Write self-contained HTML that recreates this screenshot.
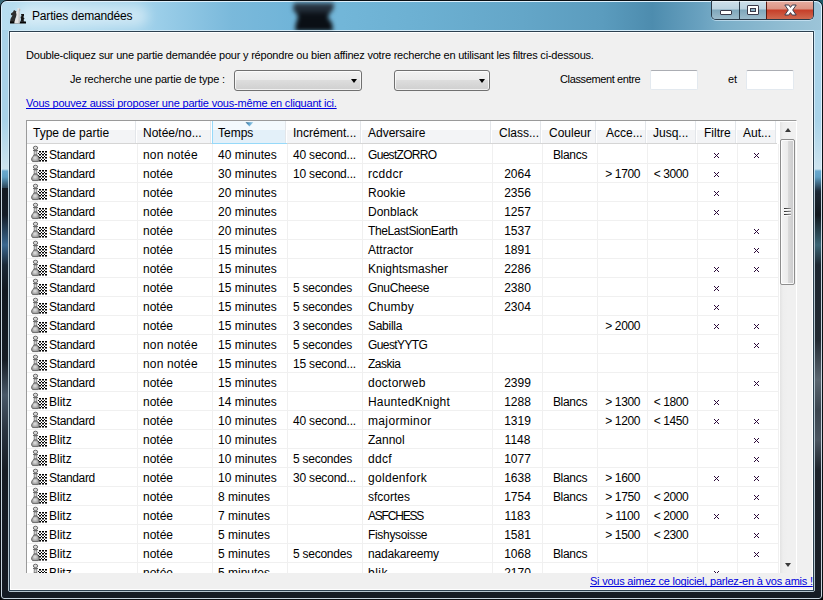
<!DOCTYPE html>
<html><head><meta charset="utf-8">
<style>
*{box-sizing:border-box}
html,body{margin:0;padding:0}
body{width:823px;height:600px;overflow:hidden;position:relative;background:#000;font-family:"Liberation Sans",sans-serif;}
.abs{position:absolute}
#frame{position:absolute;left:0;top:0;width:823px;height:600px;border-radius:7px 7px 4px 4px;border:1px solid #0a0f14;overflow:hidden;
 background:linear-gradient(to bottom,#a9d3e9 0px,#a9d3e9 120px,#cde3ee 168px,#6aa9cf 170px,#5f9fc4 176px,#1c2a38 190px,#121820 200px,#141b24 600px);}
#frame:before{content:"";position:absolute;left:0;top:0;right:0;bottom:0;border:1px solid rgba(230,245,255,0.85);border-radius:6px 6px 3px 3px;}
#title{position:absolute;left:2px;top:2px;width:819px;height:28px;background:linear-gradient(to right,#b8def0 0px,#b2dbef 60px,#9ed0ea 150px,#7ab9db 230px,#70b4d8 290px,#72b6d8 340px,#6cb0d2 420px,#64a6c8 520px,#5b9cbe 600px,#4d8cae 650px,#6aa2c0 700px,#7aaec8 720px,#94bfd4 790px,#9cc4d8 819px);border-radius:6px 6px 0 0}
#blob{position:absolute;left:290px;top:1px;width:48px;height:32px;filter:blur(2.2px)}
#blobin{position:absolute;left:0;top:0;width:48px;height:32px;background:linear-gradient(to bottom,#2c3a48 0,#26323e 8px,#0b1016 14px,#0a0e14 32px);clip-path:polygon(4px 2px,44px 2px,43px 9px,39px 13px,38px 17px,42px 22px,43px 30px,5px 30px,6px 22px,8px 17px,7px 13px,3px 9px)}
#glow{position:absolute;left:18px;top:5px;width:130px;height:22px;background:rgba(255,255,255,0.45);filter:blur(6px);border-radius:11px}
#ttl{position:absolute;left:32px;top:9px;font-size:12px;letter-spacing:-0.18px;color:#000;white-space:nowrap}
#client{position:absolute;left:9px;top:31px;width:805px;height:560px;border:1px solid #2c4050;}
#client2{position:absolute;left:10px;top:32px;width:803px;height:558px;border:1px solid #fff;background:#f0f0f0}
#fl{position:absolute;left:8px;top:30px;width:807px;height:562px;border:1px solid rgba(220,240,250,0.8);border-radius:2px}
.lbl{position:absolute;font-size:11px;color:#000;white-space:nowrap;line-height:13px}
.lnk{color:#0000dd;text-decoration:underline;text-decoration-skip-ink:none}
.combo{position:absolute;height:21px;border:1px solid #707070;border-radius:3px;background:linear-gradient(to bottom,#f2f2f2 0,#ebebeb 45%,#dddddd 50%,#cfcfcf 100%);box-shadow:inset 0 0 0 1px rgba(255,255,255,0.7)}
.combo i{position:absolute;right:4px;top:8px;width:0;height:0;border-left:3.5px solid transparent;border-right:3.5px solid transparent;border-top:4px solid #000}
.tb{position:absolute;height:20px;width:48px;background:#fff;border:1px solid #e3e9ef;border-top-color:#abadb3;border-radius:2px}
#lv{position:absolute;left:26px;top:120px;width:771px;height:453px;border:1px solid #9a9a9a;border-right-color:#fff;border-bottom:none;background:#fff;overflow:hidden}
#lvin{position:absolute;left:-27px;top:-121px;width:823px;height:600px}
#hdr{position:absolute;left:27px;top:121px;width:750px;height:23px;background:linear-gradient(to bottom,#fff 0,#fff 9px,#f3f4f6 9px,#f3f4f6 22px);border-bottom:1px solid #d5d5d5}
#sorted{position:absolute;left:212px;top:121px;width:75px;height:23px;background:linear-gradient(to bottom,#f3f9fd 0,#f3f9fd 9px,#e3f0f9 9px,#e3f0f9 22px);border-left:1px solid #96d9f9;border-right:1px solid #96d9f9;border-bottom:1px solid #96d9f9}
#sarr{position:absolute;left:245px;top:121px;width:0;height:0;border-left:4.5px solid transparent;border-right:4.5px solid transparent;border-top:4px solid #9cc6e4}
.hd{position:absolute;top:121px;width:2px;height:22px;background:linear-gradient(to right,#e3e6ea 0,#e3e6ea 1px,#fff 1px)}
.ht{position:absolute;top:126px;font-size:12px;line-height:14px;color:#000;white-space:nowrap}
.vg{position:absolute;top:144px;width:1px;height:440px;background:#f0f0f0}
.hg{position:absolute;left:27px;width:751px;height:1px;background:#f0f0f0}
.t{position:absolute;font-size:12px;line-height:19px;height:19px;color:#000;white-space:nowrap;margin-top:2px}
.c{text-align:center}
.x{position:absolute;display:block;shape-rendering:crispEdges}
.ic{position:absolute;width:20px;height:20px}
.ic svg{display:block}
#sb{position:absolute;left:780px;top:122px;width:16px;height:452px;background:linear-gradient(to right,#e3e3e3 0,#eeeeee 3px,#f0f0f0 8px,#f0f0f0 17px)}
#thumb{position:absolute;left:780px;top:139px;width:15px;height:146px;border:1px solid #8d8d8d;border-radius:2px;background:linear-gradient(to right,#f4f4f4 0,#ececec 50%,#dcdcdc 51%,#c9c9cb 100%);box-shadow:inset 0 0 0 1px rgba(255,255,255,0.8)}
.grip{position:absolute;left:784px;width:7px;height:1px;background:linear-gradient(to right,#2a2a2a,#555 40%,#9a9a9a);box-shadow:0 1px 0 rgba(255,255,255,0.8)}
.arr{position:absolute;width:0;height:0;border-left:3.5px solid transparent;border-right:3.5px solid transparent}
.cb{position:absolute;top:0px;height:20px}
</style></head><body>
<svg width="0" height="0" style="position:absolute"><symbol id="pawn" viewBox="0 0 20 20" shape-rendering="crispEdges"><defs><radialGradient id="pb" cx="0.45" cy="0.45" r="0.6"><stop offset="0" stop-color="#e4e4e4"/><stop offset="1" stop-color="#8c8c8c"/></radialGradient></defs><g fill="#000"><rect x="11" y="7" width="2" height="1"/><rect x="11" y="8" width="2" height="1" fill-opacity="0.55"/><rect x="14" y="7" width="2" height="1"/><rect x="14" y="8" width="2" height="1" fill-opacity="0.55"/><rect x="17" y="7" width="2" height="1"/><rect x="17" y="8" width="2" height="1" fill-opacity="0.55"/><rect x="11" y="10" width="2" height="1"/><rect x="11" y="11" width="2" height="1" fill-opacity="0.55"/><rect x="14" y="10" width="2" height="1"/><rect x="14" y="11" width="2" height="1" fill-opacity="0.55"/><rect x="17" y="10" width="2" height="1"/><rect x="17" y="11" width="2" height="1" fill-opacity="0.55"/><rect x="11" y="13" width="2" height="1"/><rect x="11" y="14" width="2" height="1" fill-opacity="0.55"/><rect x="14" y="13" width="2" height="1"/><rect x="14" y="14" width="2" height="1" fill-opacity="0.55"/><rect x="17" y="13" width="2" height="1"/><rect x="17" y="14" width="2" height="1" fill-opacity="0.55"/><rect x="11" y="16" width="2" height="1"/><rect x="11" y="17" width="2" height="1" fill-opacity="0.55"/><rect x="14" y="16" width="2" height="1"/><rect x="14" y="17" width="2" height="1" fill-opacity="0.55"/><rect x="17" y="16" width="2" height="1"/><rect x="17" y="17" width="2" height="1" fill-opacity="0.55"/><rect x="10" y="9" width="1" height="1"/><rect x="13" y="9" width="1" height="1"/><rect x="16" y="9" width="1" height="1"/><rect x="10" y="12" width="1" height="1"/><rect x="13" y="12" width="1" height="1"/><rect x="16" y="12" width="1" height="1"/><rect x="10" y="15" width="1" height="1"/><rect x="13" y="15" width="1" height="1"/><rect x="16" y="15" width="1" height="1"/></g><g stroke="#646464" stroke-width="0.95" shape-rendering="geometricPrecision"><ellipse cx="7.5" cy="3.9" rx="2.2" ry="1.7" fill="#d8d8d8"/><path d="M6.3 7 L8.7 7 L8.9 11 L6.1 11 Z" fill="#d4d4d4" stroke-width="0.7"/><path d="M6 11 L9 11 L10 12.5 L11 14 L11.2 16 L10.4 17.6 L4.6 17.6 L3.6 16 L3.9 14 L5 12.5 Z" fill="url(#pb)"/></g><rect x="5" y="6" width="5" height="1" fill="#6a6a6a"/></symbol></svg>
<div class="abs" style="left:0;top:0;width:823px;height:10px;background:linear-gradient(to right,#3a6a7a,#1a3a48 50%,#1e5a68)"></div>
<div id="frame"></div>
<div class="abs" style="left:2px;top:188px;width:6px;height:403px;background:linear-gradient(to bottom,#131a22 0px,#141c26 27px,#3a6890 57px,#1a2836 77px,#121820 102px,#151c24 172px,#485868 207px,#2a3440 242px,#161c24 282px,#141a22 403px)"></div>
<div class="abs" style="left:815px;top:195px;width:6px;height:396px;background:linear-gradient(to bottom,#1a2530 0px,#10161c 20px,#3a6474 50px,#1c2630 70px,#222a32 145px,#5a6670 185px,#3a444e 215px,#4a5560 245px,#1c222a 275px,#181e26 396px)"></div>
<div id="title"></div>
<div id="glow"></div>
<div id="blob"><div id="blobin"></div></div>
<div class="abs" style="left:8px;top:6px;width:20px;height:20px">
<svg width="20" height="20" viewBox="0 0 20 20">
<path d="M6 4 L8.5 5.5 L9.5 7.5 L8.5 10 L7.5 12 L7 16 L2 16 L2.5 13 L3.5 11 L4.5 9.5 L3 9 L3 7.5 L5 6 Z" fill="#2e2e2e"/>
<path d="M13 8 L16 8 L16 10 L15.3 11 L16.5 12.5 L15.5 14 L16.5 15.8 L12.5 15.8 L13 13 L12.5 11 L13.5 10 Z" fill="#161616"/>
<rect x="2" y="15.5" width="16" height="2" fill="#050505"/>
<path d="M9.5 2 L11.8 2.2 L12.5 4 L11.5 5.5 L11.5 10 L11.8 15.5 L11.5 17.5 L6.3 17.5 L6.5 15.5 L8 12 L8.5 9 L8 6 L9.5 4.5 Z" fill="#e4e4e4"/>
<path d="M11.8 2.2 L12.5 4 L11.5 5.5 L11.5 10 L11.8 15.5 L11.5 17.5 L10.5 17.5 L10.6 10 L10.8 4 Z" fill="#b8b8b8"/>
</svg></div>
<div id="ttl">Parties demandées</div>
<!-- caption buttons -->
<div class="abs" style="left:711px;top:0px;width:103px;height:20px;border:1px solid #2a3a48;border-top:none;border-radius:0 0 5px 5px;overflow:hidden;box-shadow:0 1px 0 rgba(220,240,255,0.6)">
 <div class="cb" style="left:0;width:27px;background:linear-gradient(to bottom,#d0e2ec 0,#bcd3e0 9px,#7fa7bb 10px,#9dbccc 19px)"></div>
 <div class="cb" style="left:27px;width:1px;background:#2a3a48"></div>
 <div class="cb" style="left:28px;width:26px;background:linear-gradient(to bottom,#d0e2ec 0,#bcd3e0 9px,#7fa7bb 10px,#9dbccc 19px)"></div>
 <div class="cb" style="left:54px;width:1px;background:#5a1a10"></div>
 <div class="cb" style="left:55px;width:47px;background:linear-gradient(to bottom,#e8b0a4 0,#dc9484 9px,#c73e28 10px,#d06a50 19px)"></div>
 <div class="cb" style="left:0;width:103px;height:1px;top:0;background:#0a0f14"></div>
 <div class="cb" style="left:1px;width:100px;height:1px;top:1px;background:rgba(255,255,255,0.55)"></div>
</div>
<div class="abs" style="left:720px;top:10px;width:12px;height:5px;background:#fff;border:1px solid #3a3a4a;border-radius:1px"></div>
<div class="abs" style="left:747px;top:5px;width:12px;height:10px;background:#fff;border:1px solid #3a3a4a;border-radius:1px"><div class="abs" style="left:2px;top:2px;width:6px;height:4px;background:#8fb3c6;border:1px solid #3a3a4a"></div></div>
<svg class="abs" style="left:784px;top:4px" width="13" height="12" viewBox="0 0 13 12"><path d="M0.8 1 L4.8 1 L6.5 3.4 L8.2 1 L12.2 1 L8.7 6 L12.2 11 L8.2 11 L6.5 8.6 L4.8 11 L0.8 11 L4.3 6 Z" fill="#fff" stroke="#3c3c4c" stroke-width="1" stroke-linejoin="round"/></svg>

<div id="fl"></div>
<div id="client"></div>
<div id="client2"></div>

<div class="lbl" style="left:26px;top:49px;letter-spacing:-0.21px">Double-cliquez sur une partie demandée pour y répondre ou bien affinez votre recherche en utilisant les filtres ci-dessous.</div>
<div class="lbl" style="left:70px;top:73px;letter-spacing:-0.18px">Je recherche une partie de type :</div>
<div class="combo" style="left:234px;top:70px;width:128px"><i></i></div>
<div class="combo" style="left:394px;top:70px;width:96px"><i></i></div>
<div class="lbl" style="left:560px;top:73px;letter-spacing:-0.37px">Classement entre</div>
<div class="tb" style="left:650px;top:70px"></div>
<div class="lbl" style="left:728px;top:73px">et</div>
<div class="tb" style="left:746px;top:70px"></div>
<div class="lbl lnk" style="left:26px;top:97px;letter-spacing:-0.2px">Vous pouvez aussi proposer une partie vous-même en cliquant ici.</div>

<div id="lv"><div id="lvin">
<div id="hdr"></div>
<div id="sorted"></div>
<svg class="abs" style="left:245px;top:122px" width="9" height="5" viewBox="0 0 9 5"><defs><linearGradient id="sag" x1="0" y1="0" x2="1" y2="0.3"><stop offset="0" stop-color="#2e5a78"/><stop offset="0.5" stop-color="#5aa0cc"/><stop offset="1" stop-color="#a8d8f0"/></linearGradient></defs><path d="M0.5 0.3 L8.3 0.3 L4.5 4.6 Z" fill="url(#sag)"/></svg>
<div class="hd" style="left:135px"></div>
<div class="hd" style="left:210px"></div>
<div class="hd" style="left:285px"></div>
<div class="hd" style="left:360px"></div>
<div class="hd" style="left:490px"></div>
<div class="hd" style="left:540px"></div>
<div class="hd" style="left:595px"></div>
<div class="hd" style="left:645px"></div>
<div class="hd" style="left:695px"></div>
<div class="hd" style="left:735px"></div>
<div class="hd" style="left:775px"></div>
<div class="ht" style="left:33px">Type de partie</div>
<div class="ht" style="left:143px">Notée/no...</div>
<div class="ht" style="left:218px">Temps</div>
<div class="ht" style="left:293px">Incrément...</div>
<div class="ht" style="left:368px">Adversaire</div>
<div class="ht" style="left:499px">Class...</div>
<div class="ht" style="left:549px">Couleur</div>
<div class="ht" style="left:606px">Acce...</div>
<div class="ht" style="left:653px">Jusq...</div>
<div class="ht" style="left:704px">Filtre</div>
<div class="ht" style="left:743px">Aut...</div>
<div class="vg" style="left:137px"></div>
<div class="vg" style="left:212px"></div>
<div class="vg" style="left:287px"></div>
<div class="vg" style="left:362px"></div>
<div class="vg" style="left:492px"></div>
<div class="vg" style="left:542px"></div>
<div class="vg" style="left:597px"></div>
<div class="vg" style="left:647px"></div>
<div class="vg" style="left:697px"></div>
<div class="vg" style="left:737px"></div>
<div class="vg" style="left:778px"></div>
<div class="hg" style="top:163px"></div>
<svg class="ic" style="left:28px;top:144px" width="20" height="20"><use href="#pawn"/></svg>
<div class="t" style="left:49px;top:144px;letter-spacing:-0.35px">Standard</div>
<div class="t" style="left:143px;top:144px;letter-spacing:0.15px">non notée</div>
<div class="t" style="left:218px;top:144px">40 minutes</div>
<div class="t" style="left:293px;top:144px;letter-spacing:-0.2px">40 second...</div>
<div class="t" style="left:368px;top:144px;letter-spacing:-0.69px">GuestZORRO</div>
<div class="t c" style="left:543px;width:54px;top:144px;letter-spacing:-0.3px">Blancs</div>
<svg class="x" style="left:714px;top:153px" width="5" height="5"><path d="M0 0h1v1H0zM4 0h1v1H4zM1 1h1v1H1zM3 1h1v1H3zM2 2h1v1H2zM1 3h1v1H1zM3 3h1v1H3zM0 4h1v1H0zM4 4h1v1H4z" fill="#2a0838"/></svg>
<svg class="x" style="left:754px;top:153px" width="5" height="5"><path d="M0 0h1v1H0zM4 0h1v1H4zM1 1h1v1H1zM3 1h1v1H3zM2 2h1v1H2zM1 3h1v1H1zM3 3h1v1H3zM0 4h1v1H0zM4 4h1v1H4z" fill="#2a0838"/></svg>
<div class="hg" style="top:182px"></div>
<svg class="ic" style="left:28px;top:163px" width="20" height="20"><use href="#pawn"/></svg>
<div class="t" style="left:49px;top:163px;letter-spacing:-0.35px">Standard</div>
<div class="t" style="left:143px;top:163px">notée</div>
<div class="t" style="left:218px;top:163px">30 minutes</div>
<div class="t" style="left:293px;top:163px;letter-spacing:-0.2px">10 second...</div>
<div class="t" style="left:368px;top:163px;letter-spacing:0.3px">rcddcr</div>
<div class="t c" style="left:493px;width:49px;top:163px">2064</div>
<div class="t c" style="left:598px;width:49px;top:163px;letter-spacing:-0.35px;text-indent:0.35px">&gt; 1700</div>
<div class="t c" style="left:648px;width:49px;top:163px;letter-spacing:-0.45px;text-indent:-3px">&lt; 3000</div>
<svg class="x" style="left:714px;top:172px" width="5" height="5"><path d="M0 0h1v1H0zM4 0h1v1H4zM1 1h1v1H1zM3 1h1v1H3zM2 2h1v1H2zM1 3h1v1H1zM3 3h1v1H3zM0 4h1v1H0zM4 4h1v1H4z" fill="#2a0838"/></svg>
<div class="hg" style="top:201px"></div>
<svg class="ic" style="left:28px;top:182px" width="20" height="20"><use href="#pawn"/></svg>
<div class="t" style="left:49px;top:182px;letter-spacing:-0.35px">Standard</div>
<div class="t" style="left:143px;top:182px">notée</div>
<div class="t" style="left:218px;top:182px">20 minutes</div>
<div class="t" style="left:368px;top:182px">Rookie</div>
<div class="t c" style="left:493px;width:49px;top:182px">2356</div>
<svg class="x" style="left:714px;top:191px" width="5" height="5"><path d="M0 0h1v1H0zM4 0h1v1H4zM1 1h1v1H1zM3 1h1v1H3zM2 2h1v1H2zM1 3h1v1H1zM3 3h1v1H3zM0 4h1v1H0zM4 4h1v1H4z" fill="#2a0838"/></svg>
<div class="hg" style="top:220px"></div>
<svg class="ic" style="left:28px;top:201px" width="20" height="20"><use href="#pawn"/></svg>
<div class="t" style="left:49px;top:201px;letter-spacing:-0.35px">Standard</div>
<div class="t" style="left:143px;top:201px">notée</div>
<div class="t" style="left:218px;top:201px">20 minutes</div>
<div class="t" style="left:368px;top:201px">Donblack</div>
<div class="t c" style="left:493px;width:49px;top:201px">1257</div>
<svg class="x" style="left:714px;top:210px" width="5" height="5"><path d="M0 0h1v1H0zM4 0h1v1H4zM1 1h1v1H1zM3 1h1v1H3zM2 2h1v1H2zM1 3h1v1H1zM3 3h1v1H3zM0 4h1v1H0zM4 4h1v1H4z" fill="#2a0838"/></svg>
<div class="hg" style="top:239px"></div>
<svg class="ic" style="left:28px;top:220px" width="20" height="20"><use href="#pawn"/></svg>
<div class="t" style="left:49px;top:220px;letter-spacing:-0.35px">Standard</div>
<div class="t" style="left:143px;top:220px">notée</div>
<div class="t" style="left:218px;top:220px">20 minutes</div>
<div class="t" style="left:368px;top:220px;letter-spacing:-0.41px">TheLastSionEarth</div>
<div class="t c" style="left:493px;width:49px;top:220px">1537</div>
<svg class="x" style="left:754px;top:229px" width="5" height="5"><path d="M0 0h1v1H0zM4 0h1v1H4zM1 1h1v1H1zM3 1h1v1H3zM2 2h1v1H2zM1 3h1v1H1zM3 3h1v1H3zM0 4h1v1H0zM4 4h1v1H4z" fill="#2a0838"/></svg>
<div class="hg" style="top:258px"></div>
<svg class="ic" style="left:28px;top:239px" width="20" height="20"><use href="#pawn"/></svg>
<div class="t" style="left:49px;top:239px;letter-spacing:-0.35px">Standard</div>
<div class="t" style="left:143px;top:239px">notée</div>
<div class="t" style="left:218px;top:239px">15 minutes</div>
<div class="t" style="left:368px;top:239px">Attractor</div>
<div class="t c" style="left:493px;width:49px;top:239px">1891</div>
<svg class="x" style="left:754px;top:248px" width="5" height="5"><path d="M0 0h1v1H0zM4 0h1v1H4zM1 1h1v1H1zM3 1h1v1H3zM2 2h1v1H2zM1 3h1v1H1zM3 3h1v1H3zM0 4h1v1H0zM4 4h1v1H4z" fill="#2a0838"/></svg>
<div class="hg" style="top:277px"></div>
<svg class="ic" style="left:28px;top:258px" width="20" height="20"><use href="#pawn"/></svg>
<div class="t" style="left:49px;top:258px;letter-spacing:-0.35px">Standard</div>
<div class="t" style="left:143px;top:258px">notée</div>
<div class="t" style="left:218px;top:258px">15 minutes</div>
<div class="t" style="left:368px;top:258px">Knightsmasher</div>
<div class="t c" style="left:493px;width:49px;top:258px">2286</div>
<svg class="x" style="left:714px;top:267px" width="5" height="5"><path d="M0 0h1v1H0zM4 0h1v1H4zM1 1h1v1H1zM3 1h1v1H3zM2 2h1v1H2zM1 3h1v1H1zM3 3h1v1H3zM0 4h1v1H0zM4 4h1v1H4z" fill="#2a0838"/></svg>
<svg class="x" style="left:754px;top:267px" width="5" height="5"><path d="M0 0h1v1H0zM4 0h1v1H4zM1 1h1v1H1zM3 1h1v1H3zM2 2h1v1H2zM1 3h1v1H1zM3 3h1v1H3zM0 4h1v1H0zM4 4h1v1H4z" fill="#2a0838"/></svg>
<div class="hg" style="top:296px"></div>
<svg class="ic" style="left:28px;top:277px" width="20" height="20"><use href="#pawn"/></svg>
<div class="t" style="left:49px;top:277px;letter-spacing:-0.35px">Standard</div>
<div class="t" style="left:143px;top:277px">notée</div>
<div class="t" style="left:218px;top:277px">15 minutes</div>
<div class="t" style="left:293px;top:277px;letter-spacing:-0.25px">5 secondes</div>
<div class="t" style="left:368px;top:277px;letter-spacing:-0.34px">GnuCheese</div>
<div class="t c" style="left:493px;width:49px;top:277px">2380</div>
<svg class="x" style="left:714px;top:286px" width="5" height="5"><path d="M0 0h1v1H0zM4 0h1v1H4zM1 1h1v1H1zM3 1h1v1H3zM2 2h1v1H2zM1 3h1v1H1zM3 3h1v1H3zM0 4h1v1H0zM4 4h1v1H4z" fill="#2a0838"/></svg>
<div class="hg" style="top:315px"></div>
<svg class="ic" style="left:28px;top:296px" width="20" height="20"><use href="#pawn"/></svg>
<div class="t" style="left:49px;top:296px;letter-spacing:-0.35px">Standard</div>
<div class="t" style="left:143px;top:296px">notée</div>
<div class="t" style="left:218px;top:296px">15 minutes</div>
<div class="t" style="left:293px;top:296px;letter-spacing:-0.25px">5 secondes</div>
<div class="t" style="left:368px;top:296px;letter-spacing:0.2px">Chumby</div>
<div class="t c" style="left:493px;width:49px;top:296px">2304</div>
<svg class="x" style="left:714px;top:305px" width="5" height="5"><path d="M0 0h1v1H0zM4 0h1v1H4zM1 1h1v1H1zM3 1h1v1H3zM2 2h1v1H2zM1 3h1v1H1zM3 3h1v1H3zM0 4h1v1H0zM4 4h1v1H4z" fill="#2a0838"/></svg>
<div class="hg" style="top:334px"></div>
<svg class="ic" style="left:28px;top:315px" width="20" height="20"><use href="#pawn"/></svg>
<div class="t" style="left:49px;top:315px;letter-spacing:-0.35px">Standard</div>
<div class="t" style="left:143px;top:315px">notée</div>
<div class="t" style="left:218px;top:315px">15 minutes</div>
<div class="t" style="left:293px;top:315px;letter-spacing:-0.25px">3 secondes</div>
<div class="t" style="left:368px;top:315px;letter-spacing:-0.28px">Sabilla</div>
<div class="t c" style="left:598px;width:49px;top:315px;letter-spacing:-0.35px;text-indent:0.35px">&gt; 2000</div>
<svg class="x" style="left:714px;top:324px" width="5" height="5"><path d="M0 0h1v1H0zM4 0h1v1H4zM1 1h1v1H1zM3 1h1v1H3zM2 2h1v1H2zM1 3h1v1H1zM3 3h1v1H3zM0 4h1v1H0zM4 4h1v1H4z" fill="#2a0838"/></svg>
<svg class="x" style="left:754px;top:324px" width="5" height="5"><path d="M0 0h1v1H0zM4 0h1v1H4zM1 1h1v1H1zM3 1h1v1H3zM2 2h1v1H2zM1 3h1v1H1zM3 3h1v1H3zM0 4h1v1H0zM4 4h1v1H4z" fill="#2a0838"/></svg>
<div class="hg" style="top:353px"></div>
<svg class="ic" style="left:28px;top:334px" width="20" height="20"><use href="#pawn"/></svg>
<div class="t" style="left:49px;top:334px;letter-spacing:-0.35px">Standard</div>
<div class="t" style="left:143px;top:334px;letter-spacing:0.15px">non notée</div>
<div class="t" style="left:218px;top:334px">15 minutes</div>
<div class="t" style="left:293px;top:334px;letter-spacing:-0.25px">5 secondes</div>
<div class="t" style="left:368px;top:334px;letter-spacing:-0.6px">GuestYYTG</div>
<svg class="x" style="left:754px;top:343px" width="5" height="5"><path d="M0 0h1v1H0zM4 0h1v1H4zM1 1h1v1H1zM3 1h1v1H3zM2 2h1v1H2zM1 3h1v1H1zM3 3h1v1H3zM0 4h1v1H0zM4 4h1v1H4z" fill="#2a0838"/></svg>
<div class="hg" style="top:372px"></div>
<svg class="ic" style="left:28px;top:353px" width="20" height="20"><use href="#pawn"/></svg>
<div class="t" style="left:49px;top:353px;letter-spacing:-0.35px">Standard</div>
<div class="t" style="left:143px;top:353px;letter-spacing:0.15px">non notée</div>
<div class="t" style="left:218px;top:353px">15 minutes</div>
<div class="t" style="left:293px;top:353px;letter-spacing:-0.2px">15 second...</div>
<div class="t" style="left:368px;top:353px;letter-spacing:-0.5px">Zaskia</div>
<div class="hg" style="top:391px"></div>
<svg class="ic" style="left:28px;top:372px" width="20" height="20"><use href="#pawn"/></svg>
<div class="t" style="left:49px;top:372px;letter-spacing:-0.35px">Standard</div>
<div class="t" style="left:143px;top:372px">notée</div>
<div class="t" style="left:218px;top:372px">15 minutes</div>
<div class="t" style="left:368px;top:372px;letter-spacing:0.25px">doctorweb</div>
<div class="t c" style="left:493px;width:49px;top:372px">2399</div>
<svg class="x" style="left:754px;top:381px" width="5" height="5"><path d="M0 0h1v1H0zM4 0h1v1H4zM1 1h1v1H1zM3 1h1v1H3zM2 2h1v1H2zM1 3h1v1H1zM3 3h1v1H3zM0 4h1v1H0zM4 4h1v1H4z" fill="#2a0838"/></svg>
<div class="hg" style="top:410px"></div>
<svg class="ic" style="left:28px;top:391px" width="20" height="20"><use href="#pawn"/></svg>
<div class="t" style="left:49px;top:391px">Blitz</div>
<div class="t" style="left:143px;top:391px">notée</div>
<div class="t" style="left:218px;top:391px">14 minutes</div>
<div class="t" style="left:368px;top:391px;letter-spacing:0.2px">HauntedKnight</div>
<div class="t c" style="left:493px;width:49px;top:391px">1288</div>
<div class="t c" style="left:543px;width:54px;top:391px;letter-spacing:-0.3px">Blancs</div>
<div class="t c" style="left:598px;width:49px;top:391px;letter-spacing:-0.35px;text-indent:0.35px">&gt; 1300</div>
<div class="t c" style="left:648px;width:49px;top:391px;letter-spacing:-0.45px;text-indent:-3px">&lt; 1800</div>
<svg class="x" style="left:714px;top:400px" width="5" height="5"><path d="M0 0h1v1H0zM4 0h1v1H4zM1 1h1v1H1zM3 1h1v1H3zM2 2h1v1H2zM1 3h1v1H1zM3 3h1v1H3zM0 4h1v1H0zM4 4h1v1H4z" fill="#2a0838"/></svg>
<div class="hg" style="top:429px"></div>
<svg class="ic" style="left:28px;top:410px" width="20" height="20"><use href="#pawn"/></svg>
<div class="t" style="left:49px;top:410px;letter-spacing:-0.35px">Standard</div>
<div class="t" style="left:143px;top:410px">notée</div>
<div class="t" style="left:218px;top:410px">10 minutes</div>
<div class="t" style="left:293px;top:410px;letter-spacing:-0.2px">40 second...</div>
<div class="t" style="left:368px;top:410px;letter-spacing:0.35px">majorminor</div>
<div class="t c" style="left:493px;width:49px;top:410px">1319</div>
<div class="t c" style="left:598px;width:49px;top:410px;letter-spacing:-0.35px;text-indent:0.35px">&gt; 1200</div>
<div class="t c" style="left:648px;width:49px;top:410px;letter-spacing:-0.45px;text-indent:-3px">&lt; 1450</div>
<svg class="x" style="left:714px;top:419px" width="5" height="5"><path d="M0 0h1v1H0zM4 0h1v1H4zM1 1h1v1H1zM3 1h1v1H3zM2 2h1v1H2zM1 3h1v1H1zM3 3h1v1H3zM0 4h1v1H0zM4 4h1v1H4z" fill="#2a0838"/></svg>
<svg class="x" style="left:754px;top:419px" width="5" height="5"><path d="M0 0h1v1H0zM4 0h1v1H4zM1 1h1v1H1zM3 1h1v1H3zM2 2h1v1H2zM1 3h1v1H1zM3 3h1v1H3zM0 4h1v1H0zM4 4h1v1H4z" fill="#2a0838"/></svg>
<div class="hg" style="top:448px"></div>
<svg class="ic" style="left:28px;top:429px" width="20" height="20"><use href="#pawn"/></svg>
<div class="t" style="left:49px;top:429px">Blitz</div>
<div class="t" style="left:143px;top:429px">notée</div>
<div class="t" style="left:218px;top:429px">10 minutes</div>
<div class="t" style="left:368px;top:429px">Zannol</div>
<div class="t c" style="left:493px;width:49px;top:429px">1148</div>
<svg class="x" style="left:754px;top:438px" width="5" height="5"><path d="M0 0h1v1H0zM4 0h1v1H4zM1 1h1v1H1zM3 1h1v1H3zM2 2h1v1H2zM1 3h1v1H1zM3 3h1v1H3zM0 4h1v1H0zM4 4h1v1H4z" fill="#2a0838"/></svg>
<div class="hg" style="top:467px"></div>
<svg class="ic" style="left:28px;top:448px" width="20" height="20"><use href="#pawn"/></svg>
<div class="t" style="left:49px;top:448px">Blitz</div>
<div class="t" style="left:143px;top:448px">notée</div>
<div class="t" style="left:218px;top:448px">10 minutes</div>
<div class="t" style="left:293px;top:448px;letter-spacing:-0.25px">5 secondes</div>
<div class="t" style="left:368px;top:448px;letter-spacing:0.3px">ddcf</div>
<div class="t c" style="left:493px;width:49px;top:448px">1077</div>
<svg class="x" style="left:754px;top:457px" width="5" height="5"><path d="M0 0h1v1H0zM4 0h1v1H4zM1 1h1v1H1zM3 1h1v1H3zM2 2h1v1H2zM1 3h1v1H1zM3 3h1v1H3zM0 4h1v1H0zM4 4h1v1H4z" fill="#2a0838"/></svg>
<div class="hg" style="top:486px"></div>
<svg class="ic" style="left:28px;top:467px" width="20" height="20"><use href="#pawn"/></svg>
<div class="t" style="left:49px;top:467px;letter-spacing:-0.35px">Standard</div>
<div class="t" style="left:143px;top:467px">notée</div>
<div class="t" style="left:218px;top:467px">10 minutes</div>
<div class="t" style="left:293px;top:467px;letter-spacing:-0.2px">30 second...</div>
<div class="t" style="left:368px;top:467px;letter-spacing:0.3px">goldenfork</div>
<div class="t c" style="left:493px;width:49px;top:467px">1638</div>
<div class="t c" style="left:543px;width:54px;top:467px;letter-spacing:-0.3px">Blancs</div>
<div class="t c" style="left:598px;width:49px;top:467px;letter-spacing:-0.35px;text-indent:0.35px">&gt; 1600</div>
<svg class="x" style="left:714px;top:476px" width="5" height="5"><path d="M0 0h1v1H0zM4 0h1v1H4zM1 1h1v1H1zM3 1h1v1H3zM2 2h1v1H2zM1 3h1v1H1zM3 3h1v1H3zM0 4h1v1H0zM4 4h1v1H4z" fill="#2a0838"/></svg>
<svg class="x" style="left:754px;top:476px" width="5" height="5"><path d="M0 0h1v1H0zM4 0h1v1H4zM1 1h1v1H1zM3 1h1v1H3zM2 2h1v1H2zM1 3h1v1H1zM3 3h1v1H3zM0 4h1v1H0zM4 4h1v1H4z" fill="#2a0838"/></svg>
<div class="hg" style="top:505px"></div>
<svg class="ic" style="left:28px;top:486px" width="20" height="20"><use href="#pawn"/></svg>
<div class="t" style="left:49px;top:486px">Blitz</div>
<div class="t" style="left:143px;top:486px">notée</div>
<div class="t" style="left:218px;top:486px">8 minutes</div>
<div class="t" style="left:368px;top:486px">sfcortes</div>
<div class="t c" style="left:493px;width:49px;top:486px">1754</div>
<div class="t c" style="left:543px;width:54px;top:486px;letter-spacing:-0.3px">Blancs</div>
<div class="t c" style="left:598px;width:49px;top:486px;letter-spacing:-0.35px;text-indent:0.35px">&gt; 1750</div>
<div class="t c" style="left:648px;width:49px;top:486px;letter-spacing:-0.45px;text-indent:-3px">&lt; 2000</div>
<svg class="x" style="left:754px;top:495px" width="5" height="5"><path d="M0 0h1v1H0zM4 0h1v1H4zM1 1h1v1H1zM3 1h1v1H3zM2 2h1v1H2zM1 3h1v1H1zM3 3h1v1H3zM0 4h1v1H0zM4 4h1v1H4z" fill="#2a0838"/></svg>
<div class="hg" style="top:524px"></div>
<svg class="ic" style="left:28px;top:505px" width="20" height="20"><use href="#pawn"/></svg>
<div class="t" style="left:49px;top:505px">Blitz</div>
<div class="t" style="left:143px;top:505px">notée</div>
<div class="t" style="left:218px;top:505px">7 minutes</div>
<div class="t" style="left:368px;top:505px;letter-spacing:-1.2px">ASFCHESS</div>
<div class="t c" style="left:493px;width:49px;top:505px">1183</div>
<div class="t c" style="left:598px;width:49px;top:505px;letter-spacing:-0.35px;text-indent:0.35px">&gt; 1100</div>
<div class="t c" style="left:648px;width:49px;top:505px;letter-spacing:-0.45px;text-indent:-3px">&lt; 2000</div>
<svg class="x" style="left:714px;top:514px" width="5" height="5"><path d="M0 0h1v1H0zM4 0h1v1H4zM1 1h1v1H1zM3 1h1v1H3zM2 2h1v1H2zM1 3h1v1H1zM3 3h1v1H3zM0 4h1v1H0zM4 4h1v1H4z" fill="#2a0838"/></svg>
<svg class="x" style="left:754px;top:514px" width="5" height="5"><path d="M0 0h1v1H0zM4 0h1v1H4zM1 1h1v1H1zM3 1h1v1H3zM2 2h1v1H2zM1 3h1v1H1zM3 3h1v1H3zM0 4h1v1H0zM4 4h1v1H4z" fill="#2a0838"/></svg>
<div class="hg" style="top:543px"></div>
<svg class="ic" style="left:28px;top:524px" width="20" height="20"><use href="#pawn"/></svg>
<div class="t" style="left:49px;top:524px">Blitz</div>
<div class="t" style="left:143px;top:524px">notée</div>
<div class="t" style="left:218px;top:524px">5 minutes</div>
<div class="t" style="left:368px;top:524px;letter-spacing:-0.32px">Fishysoisse</div>
<div class="t c" style="left:493px;width:49px;top:524px">1581</div>
<div class="t c" style="left:598px;width:49px;top:524px;letter-spacing:-0.35px;text-indent:0.35px">&gt; 1500</div>
<div class="t c" style="left:648px;width:49px;top:524px;letter-spacing:-0.45px;text-indent:-3px">&lt; 2300</div>
<svg class="x" style="left:754px;top:533px" width="5" height="5"><path d="M0 0h1v1H0zM4 0h1v1H4zM1 1h1v1H1zM3 1h1v1H3zM2 2h1v1H2zM1 3h1v1H1zM3 3h1v1H3zM0 4h1v1H0zM4 4h1v1H4z" fill="#2a0838"/></svg>
<div class="hg" style="top:562px"></div>
<svg class="ic" style="left:28px;top:543px" width="20" height="20"><use href="#pawn"/></svg>
<div class="t" style="left:49px;top:543px">Blitz</div>
<div class="t" style="left:143px;top:543px">notée</div>
<div class="t" style="left:218px;top:543px">5 minutes</div>
<div class="t" style="left:293px;top:543px;letter-spacing:-0.25px">5 secondes</div>
<div class="t" style="left:368px;top:543px;letter-spacing:-0.17px">nadakareemy</div>
<div class="t c" style="left:493px;width:49px;top:543px">1068</div>
<div class="t c" style="left:543px;width:54px;top:543px;letter-spacing:-0.3px">Blancs</div>
<svg class="x" style="left:754px;top:552px" width="5" height="5"><path d="M0 0h1v1H0zM4 0h1v1H4zM1 1h1v1H1zM3 1h1v1H3zM2 2h1v1H2zM1 3h1v1H1zM3 3h1v1H3zM0 4h1v1H0zM4 4h1v1H4z" fill="#2a0838"/></svg>
<div class="hg" style="top:581px"></div>
<svg class="ic" style="left:28px;top:562px" width="20" height="20"><use href="#pawn"/></svg>
<div class="t" style="left:49px;top:562px">Blitz</div>
<div class="t" style="left:143px;top:562px">notée</div>
<div class="t" style="left:218px;top:562px">5 minutes</div>
<div class="t" style="left:368px;top:562px;letter-spacing:0.5px">blik</div>
<div class="t c" style="left:493px;width:49px;top:562px">2170</div>
<svg class="x" style="left:714px;top:571px" width="5" height="5"><path d="M0 0h1v1H0zM4 0h1v1H4zM1 1h1v1H1zM3 1h1v1H3zM2 2h1v1H2zM1 3h1v1H1zM3 3h1v1H3zM0 4h1v1H0zM4 4h1v1H4z" fill="#2a0838"/></svg>
<div id="sb"></div>
<div class="arr" style="left:785px;top:128px;border-bottom:4px solid #3a3a3a"></div>
<div id="thumb"></div>
<div class="grip" style="top:208px"></div>
<div class="grip" style="top:211px"></div>
<div class="grip" style="top:214px"></div>
<div class="arr" style="left:785px;top:563px;border-top:4px solid #3a3a3a"></div>
</div></div>

<div class="lbl lnk" style="left:590px;top:575px;letter-spacing:-0.22px">Si vous aimez ce logiciel, parlez-en à vos amis !</div>
</body></html>
